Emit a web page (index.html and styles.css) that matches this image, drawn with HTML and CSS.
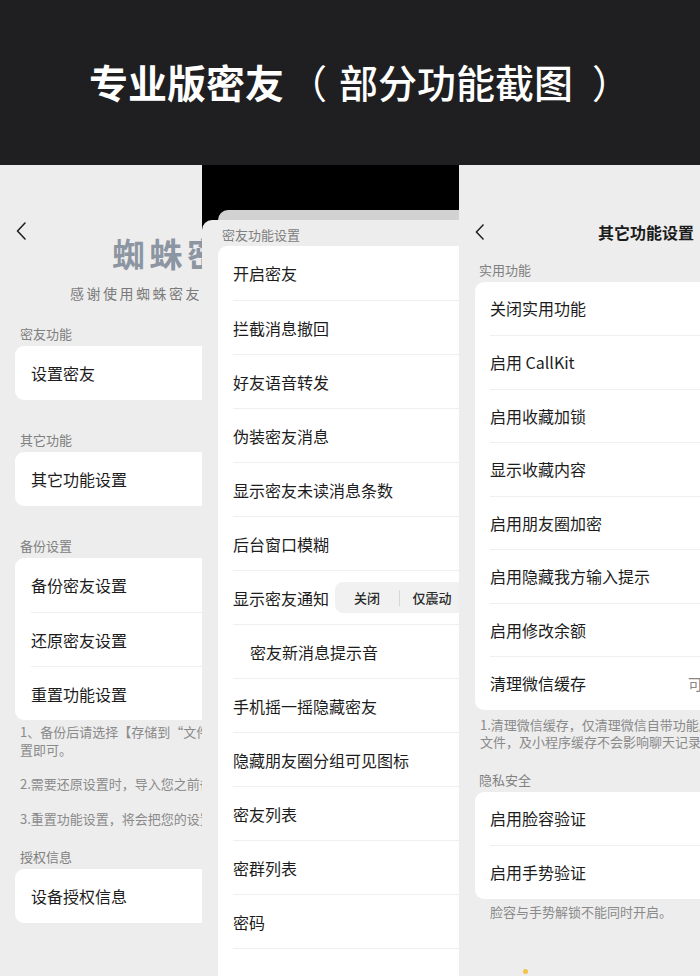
FILE: index.html
```html
<!DOCTYPE html>
<html lang="zh-CN">
<head>
<meta charset="utf-8">
<title>专业版密友</title>
<link rel="stylesheet" href="styles.css">
</head>
<body>
<header class="banner">
  <h1 class="banner-title"><span class="bt-strong">专业版密友</span><span class="bt-paren bt-open">（</span><span class="bt-light">部分功能截图</span><span class="bt-paren bt-close">）</span></h1>
</header>
<main class="shots">
  <section class="shot shot-home">
    <div class="pane">
      <div class="home-head">
        <svg class="back" viewBox="0 0 10 18" width="10" height="18"><polyline points="9,1 1.5,9 9,17" fill="none" stroke="#1c1c1c" stroke-width="1.5" stroke-linecap="round" stroke-linejoin="round"/></svg>
        <div class="home-title">蜘蛛密友</div>
      </div>
      <div class="home-sub">感谢使用蜘蛛密友，祝您使用愉快</div>

      <div class="group group-first">
        <div class="group-label">密友功能</div>
        <div class="card"><div class="row">设置密友</div></div>
      </div>
      <div class="group">
        <div class="group-label">其它功能</div>
        <div class="card"><div class="row">其它功能设置</div></div>
      </div>
      <div class="group">
        <div class="group-label">备份设置</div>
        <div class="card">
          <div class="row">备份密友设置</div>
          <div class="row">还原密友设置</div>
          <div class="row">重置功能设置</div>
        </div>
      </div>
      <div class="notes">
        <p>1、备份后请选择【存储到“文件”】，并选择任意位<br>置即可。</p>
        <p>2.需要还原设置时，导入您之前备份的文件即可。</p>
        <p>3.重置功能设置，将会把您的设置恢复为默认。</p>
      </div>
      <div class="group group-after-notes">
        <div class="group-label">授权信息</div>
        <div class="card"><div class="row">设备授权信息</div></div>
      </div>
    </div>
  </section>

  <section class="shot shot-list">
    <div class="list-top"></div>
    <div class="back-sheet"></div>
    <div class="sheet">
      <div class="pane">
        <div class="group-label">密友功能设置</div>
        <div class="card">
          <div class="row">开启密友</div>
          <div class="row">拦截消息撤回</div>
          <div class="row">好友语音转发</div>
          <div class="row">伪装密友消息</div>
          <div class="row">显示密友未读消息条数</div>
          <div class="row">后台窗口模糊</div>
          <div class="row">显示密友通知
            <div class="seg"><span class="seg-item">关闭</span><i class="seg-div"></i><span class="seg-item">仅震动</span><i class="seg-div"></i><span class="seg-item">全部</span></div>
          </div>
          <div class="row row-indent">密友新消息提示音</div>
          <div class="row">手机摇一摇隐藏密友</div>
          <div class="row">隐藏朋友圈分组可见图标</div>
          <div class="row">密友列表</div>
          <div class="row">密群列表</div>
          <div class="row">密码</div>
          <div class="row"></div>
        </div>
      </div>
    </div>
  </section>

  <section class="shot shot-more">
    <div class="pane">
      <div class="more-nav">
        <svg class="back back-sm" viewBox="0 0 10 18" width="9" height="16"><polyline points="9,1 1.5,9 9,17" fill="none" stroke="#1c1c1c" stroke-width="1.6" stroke-linecap="round" stroke-linejoin="round"/></svg>
        <div class="more-title">其它功能设置</div>
      </div>
      <div class="group group-more-first">
        <div class="group-label">实用功能</div>
        <div class="card">
          <div class="row">关闭实用功能</div>
          <div class="row">启用 CallKit</div>
          <div class="row">启用收藏加锁</div>
          <div class="row">显示收藏内容</div>
          <div class="row">启用朋友圈加密</div>
          <div class="row">启用隐藏我方输入提示</div>
          <div class="row">启用修改余额</div>
          <div class="row">清理微信缓存<span class="row-value">可清理</span></div>
        </div>
      </div>
      <div class="notes notes-more">
        <p>1.清理微信缓存，仅清理微信自带功能产生的缓存<br>文件，及小程序缓存不会影响聊天记录。</p>
      </div>
      <div class="group group-privacy">
        <div class="group-label">隐私安全</div>
        <div class="card">
          <div class="row">启用脸容验证</div>
          <div class="row">启用手势验证</div>
        </div>
      </div>
      <div class="footnote">脸容与手势解锁不能同时开启。</div>
      <div class="dot"></div>
    </div>
  </section>
</main>
</body>
</html>
```

FILE: styles.css
```css
* {
  box-sizing: border-box;
  margin: 0;
  padding: 0;
}

html,
body {
  width: 700px;
  height: 976px;
  overflow: hidden;
}

body {
  font-family: "Noto Sans CJK SC", "Noto Sans", sans-serif;
  background: #ededed;
  color: #1c1c1c;
}

/* banner */
.banner {
  height: 165px;
  background: #1f1f21;
  display: flex;
  align-items: center;
  padding-left: 89px;
  padding-bottom: 3px;
}

.banner-title {
  display: flex;
  font-size: 39px;
  line-height: 1;
  color: #ffffff;
  font-weight: 700;
  white-space: nowrap;
}

.bt-light {
  font-weight: 500;
}

.bt-paren {
  font-weight: 400;
}

.bt-open {
  margin-left: 4px;
  margin-right: 12px;
}

.bt-close {
  margin-left: 19px;
}

/* screenshot strip */
.shots {
  display: flex;
  height: 811px;
}

.shot {
  overflow: hidden;
  flex: none;
}

.pane {
  width: 360px;
}

.shot-home {
  width: 202px;
  background: #ededed;
  padding-top: 57px;
}

.shot-list {
  width: 257px;
  background: #000000;
  display: flex;
  flex-direction: column;
}

.shot-more {
  flex: 1;
  background: #ededed;
  padding-top: 54.5px;
}

/* shared list parts */
.group-label {
  font-size: 13px;
  line-height: 18px;
  color: #808080;
  padding-left: 20px;
  margin-bottom: 3px;
  white-space: nowrap;
}

.card {
  background: #ffffff;
  border-radius: 9px;
  margin-left: 15px;
}

.row {
  height: 54px;
  margin-left: 16px;
  display: flex;
  align-items: center;
  font-size: 16px;
  white-space: nowrap;
}

.row + .row {
  border-top: 1px solid #efefef;
}

.group {
  margin-top: 31px;
}

.notes {
  padding-left: 20px;
  font-size: 13px;
  line-height: 18px;
  color: #8a8a8a;
  white-space: nowrap;
  margin-top: 2.5px;
}

.notes p + p {
  margin-top: 16.5px;
}

/* panel 1 */
.home-head {
  display: flex;
  align-items: flex-start;
  padding-left: 16px;
}

.back {
  flex: none;
}

.home-title {
  margin-left: 86px;
  margin-top: 10.5px;
  font-size: 33px;
  line-height: 40px;
  font-weight: 700;
  letter-spacing: 4.5px;
  color: #8c95a2;
  white-space: nowrap;
}

.home-sub {
  margin-top: 10px;
  padding-left: 70px;
  font-size: 14px;
  line-height: 20px;
  letter-spacing: 2.5px;
  color: #7a7a7a;
  white-space: nowrap;
}

.shot-home .group-first {
  margin-top: 22.5px;
}

.shot-home .group-after-notes {
  margin-top: 20.5px;
}

/* panel 2 */
.list-top {
  height: 45px;
  flex: none;
}

.back-sheet {
  height: 10px;
  flex: none;
  margin-left: 16px;
  background: #d2d2d2;
  border-top-left-radius: 10px;
}

.sheet {
  flex: 1;
  background: #ededed;
  border-top-left-radius: 10px;
  padding-top: 6px;
}

.sheet .group-label {
  margin-bottom: 2px;
}

.sheet .card {
  margin-left: 16px;
}

.sheet .row {
  margin-left: 15px;
}

.row-indent {
  padding-left: 17px;
}

.seg {
  margin-left: 6px;
  height: 31px;
  display: flex;
  align-items: center;
  background: #f1f1f1;
  border-radius: 8px;
}

.seg-item {
  width: 64px;
  text-align: center;
  font-size: 13px;
  font-weight: 500;
  color: #2a2a2a;
}

.seg-div {
  width: 1px;
  height: 16px;
  background: #d6d6d6;
}

/* panel 3 */
.more-nav {
  height: 25px;
  display: flex;
  align-items: center;
  padding-left: 16px;
}

.more-title {
  margin-left: 114px;
  font-size: 16px;
  font-weight: 700;
  white-space: nowrap;
}

.group-more-first {
  margin-top: 16px;
}

.shot-more .card {
  margin-left: 16px;
}

.shot-more .row {
  margin-left: 15px;
  height: 53.5px;
}

.row-value {
  margin-left: 102px;
  font-size: 15px;
  color: #888888;
}

.notes-more {
  padding-left: 21px;
  line-height: 17.5px;
  margin-top: 6px;
}

.group-privacy {
  margin-top: 20px;
}

.footnote {
  margin-top: 4px;
  padding-left: 31px;
  font-size: 13px;
  line-height: 18px;
  color: #8a8a8a;
  white-space: nowrap;
}

.dot {
  width: 5px;
  height: 5px;
  margin-top: 48px;
  margin-left: 64px;
  border-radius: 50%;
  background: #f3c34a;
}
```
